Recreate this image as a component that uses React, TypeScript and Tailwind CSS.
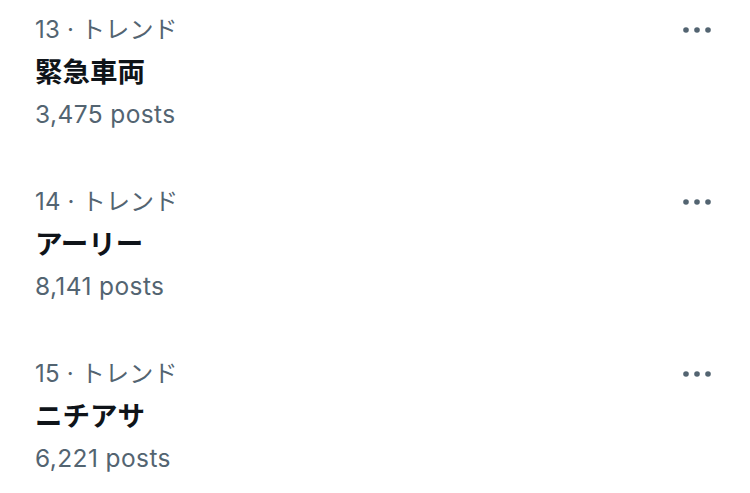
import React from "react";

interface Trend {
  rank: number;
  name: string;
  posts: string;
}

const trends: Trend[] = [
  { rank: 13, name: "緊急車両", posts: "3,475" },
  { rank: 14, name: "アーリー", posts: "8,141" },
  { rank: 15, name: "ニチアサ", posts: "6,221" },
];

const MoreIcon: React.FC = () => (
  <svg width="28" height="10" viewBox="0 0 28 10" className="text-[#536471]">
    <circle cx="3" cy="5" r="2.8" fill="currentColor" />
    <circle cx="14" cy="5" r="2.8" fill="currentColor" />
    <circle cx="25" cy="5" r="2.8" fill="currentColor" />
  </svg>
);

const TrendItem: React.FC<{ trend: Trend }> = ({ trend }) => (
  <div className="flex justify-between pl-[35px] pr-[39px] pt-[8px] pb-[38px]">
    <div className="flex flex-col">
      <div className="h-[44px] flex items-center text-[24px] tracking-[0.2px] text-[#536471]">
        {trend.rank} · トレンド
      </div>
      <div className="h-[42px] flex items-center text-[27.5px] font-bold text-[#0f1419]">
        {trend.name}
      </div>
      <div className="h-[40px] flex items-center text-[24.5px] tracking-[0.4px] text-[#536471]">
        {trend.posts} posts
      </div>
    </div>
    <div className="h-[44px] flex items-center">
      <MoreIcon />
    </div>
  </div>
);

export default function App() {
  return (
    <div
      className="w-[750px] h-[493px] bg-white overflow-hidden"
      style={{ fontFamily: 'Inter, "Noto Sans CJK JP", sans-serif' }}
    >
      {trends.map((t) => (
        <TrendItem key={t.rank} trend={t} />
      ))}
    </div>
  );
}
